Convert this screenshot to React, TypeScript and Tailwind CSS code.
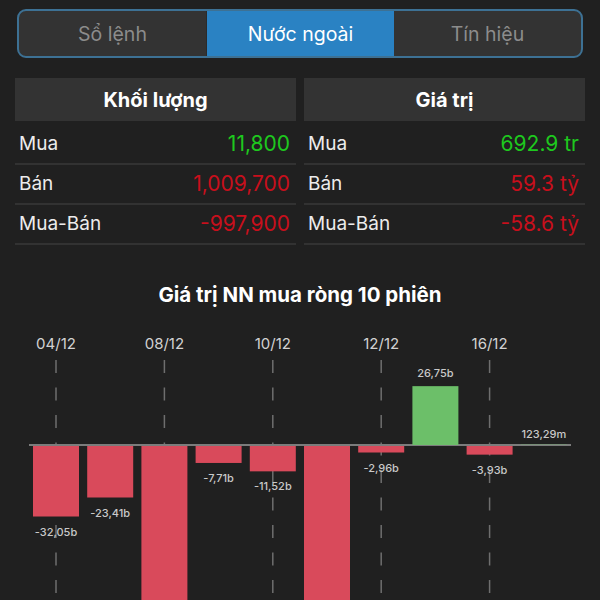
import React from "react";

type Row = { label: string; value: string; up: boolean };

const volumeRows: Row[] = [
  { label: "Mua", value: "11,800", up: true },
  { label: "Bán", value: "1,009,700", up: false },
  { label: "Mua-Bán", value: "-997,900", up: false },
];

const valueRows: Row[] = [
  { label: "Mua", value: "692.9 tr", up: true },
  { label: "Bán", value: "59.3 tỷ", up: false },
  { label: "Mua-Bán", value: "-58.6 tỷ", up: false },
];

const tabs = ["Sổ lệnh", "Nước ngoài", "Tín hiệu"];

// net foreign buy value, in billions
const sessions = [
  { value: -32.05, label: "-32,05b", date: "04/12" },
  { value: -23.41, label: "-23,41b" },
  { value: -95, label: "", date: "08/12" },
  { value: -7.71, label: "-7,71b" },
  { value: -11.52, label: "-11,52b", date: "10/12" },
  { value: -95, label: "" },
  { value: -2.96, label: "-2,96b", date: "12/12" },
  { value: 26.75, label: "26,75b" },
  { value: -3.93, label: "-3,93b", date: "16/12" },
  { value: 0.12329, label: "123,29m" },
];

const AXIS_Y = 445;
const SCALE = 2.2;
const BAR_W = 46;
const STEP = 54.2;
const FIRST_X = 33;

function StatColumn({ title, rows }: { title: string; rows: Row[] }) {
  return (
    <div className="flex flex-col">
      <div className="flex h-[43px] items-center justify-center bg-[#333333] text-[20px] font-bold text-white">
        {title}
      </div>
      <div className="mt-[4px]">
        {rows.map((row) => (
          <div
            key={row.label}
            className="flex h-[40px] items-center justify-between border-b-2 border-[#323232] pl-[4px] pr-[6px]"
          >
            <span className="text-[19px] text-[#ececec]">{row.label}</span>
            <span className={`text-[21px] ${row.up ? "text-[#1ec81e]" : "text-[#c80f1c]"}`}>{row.value}</span>
          </div>
        ))}
      </div>
    </div>
  );
}

function NetBuyChart() {
  return (
    <svg width={600} height={280} viewBox="0 320 600 280" className="block">
      {sessions.map((s, i) => {
        if (!s.date) return null;
        const cx = FIRST_X + i * STEP + BAR_W / 2;
        return (
          <g key={`d${i}`}>
            <text x={cx} y={349} textAnchor="middle" fontSize={15} fill="#d2d2d2">
              {s.date}
            </text>
            <line
              x1={cx}
              y1={360}
              x2={cx}
              y2={600}
              stroke="#6e6e6e"
              strokeWidth={1.5}
              strokeDasharray="13 14.5"
            />
          </g>
        );
      })}

      <line x1={29} y1={AXIS_Y} x2={571} y2={AXIS_Y} stroke="#7c7c7c" strokeWidth={2} />

      {sessions.map((s, i) => {
        const x = FIRST_X + i * STEP;
        const h = Math.abs(s.value) * SCALE;
        const up = s.value > 0;
        const y = up ? AXIS_Y - h : AXIS_Y + 1;
        const labelY = up ? (h < 2 ? AXIS_Y - 7 : y - 9) : y + h + 19;
        return (
          <g key={`b${i}`}>
            <rect x={x} y={y} width={BAR_W} height={h} fill={up ? "#6cbf69" : "#d94a5b"} />
            {s.label && (
              <text
                x={x + BAR_W / 2}
                y={labelY}
                textAnchor="middle"
                fontSize={11}
                fontWeight={500}
                fill="#c9c9c9"
              >
                {s.label}
              </text>
            )}
          </g>
        );
      })}
    </svg>
  );
}

export default function App() {
  return (
    <div
      className="h-[600px] w-[600px] overflow-hidden bg-[#202020]"
      style={{ fontFamily: "Inter, 'Noto Sans', sans-serif" }}
    >
      <div className="mx-[17px] mt-[9px] flex h-[49px] overflow-hidden rounded-[9px] border-2 border-[#3d7194] bg-[#333333]">
        {tabs.map((tab, i) => (
          <div
            key={tab}
            className={`flex flex-1 items-center justify-center pt-[3px] text-[19.5px] ${
              i === 1 ? "bg-[#2a82c3] text-white" : "text-[#8c8c8c]"
            } ${i === 0 ? "border-r border-[#2b2b2b]" : ""}`}
          >
            {tab}
          </div>
        ))}
      </div>

      <div className="mt-[20px] grid grid-cols-2 gap-[8px] px-[15px]">
        <StatColumn title="Khối lượng" rows={volumeRows} />
        <StatColumn title="Giá trị" rows={valueRows} />
      </div>

      <div className="mt-[37px] text-center text-[20.5px] font-bold leading-[26px] text-white">
        Giá trị NN mua ròng 10 phiên
      </div>

      <div className="mt-[12px]">
        <NetBuyChart />
      </div>
    </div>
  );
}
